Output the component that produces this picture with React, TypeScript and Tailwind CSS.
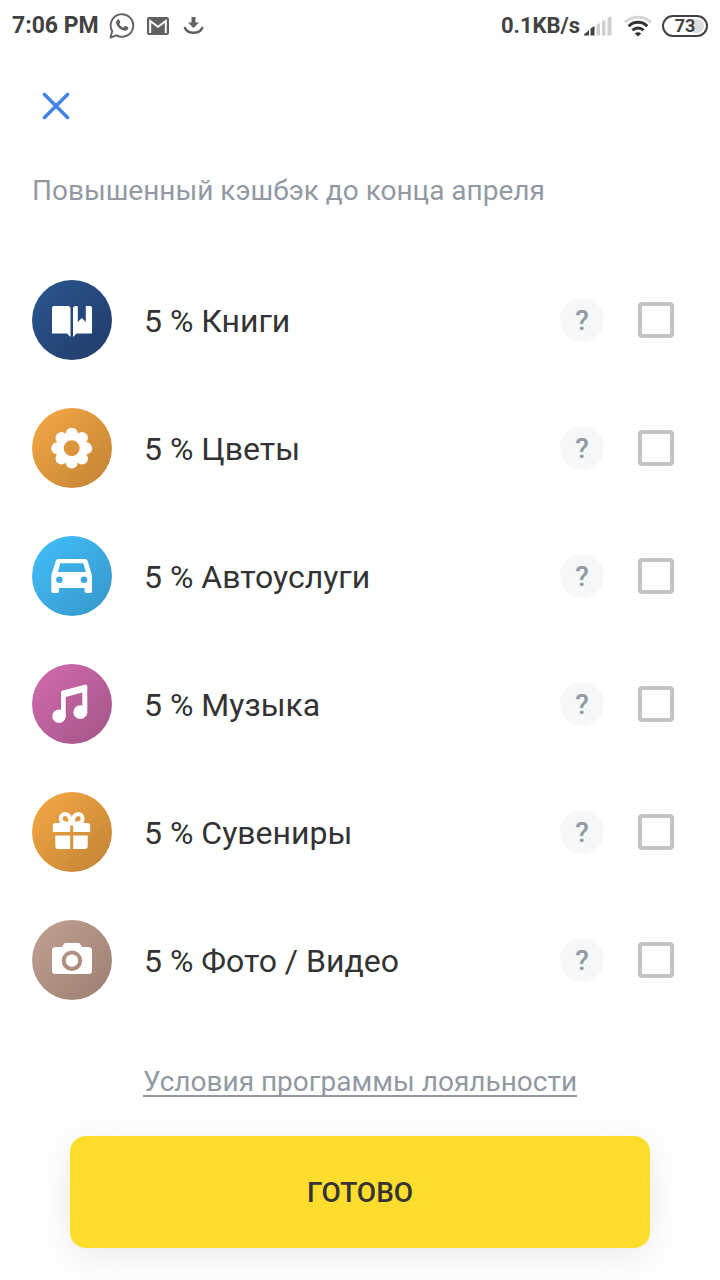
import { type ReactNode, useState } from "react";

const categories: {
  id: string;
  title: string;
  badge: string;
  icon: ReactNode;
}[] = [
  {
    id: "books",
    title: "Книги",
    badge: "from-[#2a5790] to-[#213b68]",
    icon: <BookIcon />,
  },
  {
    id: "flowers",
    title: "Цветы",
    badge: "from-[#f6aa45] to-[#c18235]",
    icon: <FlowerIcon />,
  },
  {
    id: "auto",
    title: "Автоуслуги",
    badge: "from-[#43c0fc] to-[#3596c8]",
    icon: <CarIcon />,
  },
  {
    id: "music",
    title: "Музыка",
    badge: "from-[#d36cae] to-[#a25488]",
    icon: <MusicIcon />,
  },
  {
    id: "souvenirs",
    title: "Сувениры",
    badge: "from-[#f6aa45] to-[#c18235]",
    icon: <GiftIcon />,
  },
  {
    id: "photo",
    title: "Фото / Видео",
    badge: "from-[#c3a193] to-[#9b7e72]",
    icon: <CameraIcon />,
  },
];

function BadgeSvg({ children }: { children: ReactNode }) {
  return (
    <svg viewBox="0 0 80 80" className="size-20" fill="#fff" aria-hidden>
      {children}
    </svg>
  );
}

function BookIcon() {
  return (
    <BadgeSvg>
      <path d="M22 26h14.500l2 1.500V57L35 53.500H20V28a2 2 0 0 1 2-2Z" />
      <path d="M43 26h2.800v16l4-4 4 4V26H58a2 2 0 0 1 2 2v25.500H44.500L41 57V27.500Z" />
    </BadgeSvg>
  );
}

function FlowerIcon() {
  return (
    <BadgeSvg>
      <circle cx="39.700" cy="40.200" r="11.800" fill="none" stroke="#fff" strokeWidth="7.600" />
      <circle cx="39.700" cy="25.800" r="6" />
      <circle cx="49.900" cy="30" r="6" />
      <circle cx="54.100" cy="40.200" r="6" />
      <circle cx="49.900" cy="50.400" r="6" />
      <circle cx="39.700" cy="54.600" r="6" />
      <circle cx="29.500" cy="50.400" r="6" />
      <circle cx="25.300" cy="40.200" r="6" />
      <circle cx="29.500" cy="30" r="6" />
    </BadgeSvg>
  );
}

function CarIcon() {
  return (
    <BadgeSvg>
      <path
        fillRule="evenodd"
        d="M26.500 23h26.500c1.500 0 2.300.7 2.700 2l4 13.500c.2.700.3 1.300.3 2V55a2 2 0 0 1-2 2h-3.500a2 2 0 0 1-2-2v-3H27v3a2 2 0 0 1-2 2h-3.700a2 2 0 0 1-2-2V40.500c0-.7 0-1.300.2-2L23.800 25c.4-1.300 1.200-2 2.700-2ZM28.300 27.300L25.800 36h28l-2.500-8.700ZM27.400 40.400a3.300 3.300 0 1 0 0 6.600a3.300 3.300 0 0 0 0-6.600ZM52 40.400a3.300 3.300 0 1 0 0 6.600a3.300 3.300 0 0 0 0-6.600Z"
      />
    </BadgeSvg>
  );
}

function MusicIcon() {
  return (
    <BadgeSvg>
      <circle cx="27" cy="52.200" r="6.700" />
      <circle cx="48.300" cy="48.200" r="6.900" />
      <path d="M29 53V29c0-1.300.6-2 1.800-2.400l22-5.800c1.500-.4 2.500.2 2.500 1.700V49h-5V28.500L33.700 33v20Z" />
    </BadgeSvg>
  );
}

function GiftIcon() {
  return (
    <BadgeSvg>
      <path
        fill="none"
        stroke="#fff"
        strokeWidth="4"
        d="M39 31.500h-4.500c-3.500 0-5.700-1.800-5.700-4.700 0-2.600 1.800-4.700 4.500-4.700 3.500 0 5.200 4 5.700 9.400ZM40.400 31.500h4.500c3.500 0 5.700-1.800 5.700-4.700 0-2.600-1.800-4.700-4.500-4.700-3.500 0-5.200 4-5.700 9.400Z"
      />
      <path d="M24 31h14.200v9H20.800v-5.800A3.200 3.200 0 0 1 24 31ZM41.200 31H55a3.200 3.200 0 0 1 3.200 3.200V40h-17ZM23.300 43.600h14.900V57H26.300a3 3 0 0 1-3-3ZM41.200 43.600h14.500V54a3 3 0 0 1-3 3H41.200Z" />
    </BadgeSvg>
  );
}

function CameraIcon() {
  return (
    <BadgeSvg>
      <path
        fillRule="evenodd"
        d="M34 23h12c1 0 1.600.3 2.100 1.100L50 27h6.500a3.500 3.500 0 0 1 3.500 3.500v20a3.500 3.500 0 0 1-3.500 3.500h-33a3.500 3.500 0 0 1-3.500-3.500v-20a3.500 3.500 0 0 1 3.500-3.500H30l1.900-2.900C32.400 23.300 33 23 34 23ZM39.900 30.500a10.200 10.200 0 1 0 0 20.400a10.200 10.200 0 0 0 0-20.400Z"
      />
      <circle cx="39.900" cy="40.700" r="6.200" />
    </BadgeSvg>
  );
}

function WhatsAppIcon() {
  return (
    <svg viewBox="0 0 26 28" className="h-7 w-[26px]" aria-hidden>
      <path
        d="M1.500 25.500l1.700-6.300a11.300 11.300 0 1 1 4.300 4.200Z"
        fill="none"
        stroke="#616161"
        strokeWidth="1.900"
        strokeLinejoin="round"
      />
      <path
        d="M8.800 7.500c.5-.5 1.200-.3 1.400.2l1 2.300c.2.500 0 .8-.9 1.900.9 1.700 2.200 2.900 4.100 3.700l1.200-1.400c.3-.4.600-.4 1-.2l2.200 1.100c.5.200.6.500.5 1-.4 2-2.100 2.800-4 2.500-4.100-.7-7.900-4.300-8.200-7.800-.1-1.400.7-2.600 1.700-3.300Z"
        fill="#616161"
      />
    </svg>
  );
}

function GmailIcon() {
  return (
    <svg viewBox="0 0 22 18" className="h-[18px] w-[22px]" aria-hidden>
      <rect width="22" height="18" rx="2" fill="#616161" />
      <path
        d="M3.200 16V4L11 9.700 18.800 4v12"
        fill="none"
        stroke="#fff"
        strokeWidth="2"
      />
    </svg>
  );
}

function DownloadIcon() {
  return (
    <svg viewBox="0 0 22 20" className="h-5 w-[22px]" aria-hidden>
      <path d="M8.500 1h4v5.500H16L10.500 12 5 6.500h3.500Z" fill="#616161" />
      <path
        d="M2 12c1.400 3 4.800 4.800 8.600 4.800s7.200-1.800 8.600-4.800"
        fill="none"
        stroke="#616161"
        strokeWidth="2.600"
        strokeLinecap="round"
      />
    </svg>
  );
}

function SignalIcon() {
  return (
    <svg viewBox="0 0 28 20" className="h-5 w-7" aria-hidden>
      <path d="M0 19.500v-1l5-4.500v5.500ZM6.500 19.500v-7l4-2.500v9.500Z" fill="#424242" />
      <path
        d="M12.500 19.500V9l3.500-2v12.500ZM18 19.500V5.500l3.500-2v16ZM23.500 19.500V2L27.500 0v19.500Z"
        fill="#cfcfcf"
      />
    </svg>
  );
}

function WifiIcon() {
  return (
    <svg viewBox="0 0 28 22" className="h-[22px] w-7" fill="none" aria-hidden>
      <path d="M1 7.500a18.500 18.500 0 0 1 26 0" stroke="#d4d4d4" strokeWidth="2.800" />
      <path
        d="M4.700 11.200a13.200 13.200 0 0 1 18.600 0M8.400 15.200a8 8 0 0 1 11.200 0"
        stroke="#333"
        strokeWidth="3"
      />
      <path d="M10.800 18.500a4.600 4.600 0 0 1 6.400 0L14 21.500Z" fill="#333" />
    </svg>
  );
}

function StatusBar() {
  return (
    <div className="flex h-[52px] items-center justify-between px-3 text-[#424242]">
      <div className="flex items-center">
        <span className="text-[23px] leading-7 font-bold">7:06 PM</span>
        <span className="ml-2.5 flex items-center gap-3">
          <WhatsAppIcon />
          <GmailIcon />
          <span className="ml-0.5">
            <DownloadIcon />
          </span>
        </span>
      </div>
      <div className="flex items-center">
        <span className="text-[22px] leading-7 font-bold">0.1KB/s</span>
        <span className="ml-1">
          <SignalIcon />
        </span>
        <span className="ml-3">
          <WifiIcon />
        </span>
        <span className="ml-2.5 flex h-[22px] w-[46px] items-center justify-center rounded-full border-2 border-[#424242] bg-linear-to-r from-white from-70% to-[#dedede] to-70% bg-clip-content p-0.5 text-[18px] leading-none font-bold">
          73
        </span>
      </div>
    </div>
  );
}

export default function App() {
  const [selected, setSelected] = useState<string[]>([]);

  const toggle = (id: string) =>
    setSelected((prev) =>
      prev.includes(id) ? prev.filter((item) => item !== id) : [...prev, id],
    );

  return (
    <div className="min-h-screen bg-white font-[Roboto,sans-serif] text-[#333]">
      <StatusBar />

      <header className="px-8 pt-[30px]">
        <button
          type="button"
          aria-label="Закрыть"
          className="flex size-12 items-center justify-center"
        >
          <svg viewBox="0 0 28 28" className="size-7" aria-hidden>
            <path
              d="M2.500 2.500l23 23M25.500 2.500l-23 23"
              stroke="#4486e8"
              strokeWidth="3.600"
              strokeLinecap="round"
            />
          </svg>
        </button>
        <h1 className="mt-[43px] text-[28px] leading-9 text-[#9299a2]">
          Повышенный кэшбэк до конца апреля
        </h1>
      </header>

      <ul className="mt-[71px] flex flex-col gap-12 pr-[46px] pl-8">
        {categories.map(({ id, title, badge, icon }) => (
          <li key={id} className="flex items-center">
            <span className={`size-20 rounded-full bg-linear-to-br ${badge}`}>
              {icon}
            </span>
            <label
              htmlFor={id}
              className="ml-8 flex-1 pt-0.5 text-[32px] leading-10"
            >
              5 % {title}
            </label>
            <button
              type="button"
              aria-label={`Подробнее: ${title}`}
              className="size-11 rounded-full bg-[#f5f7f9] pt-0.5 text-[28px] leading-none font-medium text-[#9299a2]"
            >
              ?
            </button>
            <input
              id={id}
              type="checkbox"
              checked={selected.includes(id)}
              onChange={() => toggle(id)}
              className="ml-[34px] size-9 appearance-none rounded-[4px] border-4 border-[#c4c4c4] checked:bg-[#ffdd2d]"
            />
          </li>
        ))}
      </ul>

      <footer className="mt-16 flex flex-col items-stretch px-[70px] pb-8">
        <a
          href="#terms"
          className="self-center text-[28px] leading-9 text-[#9299a2] underline decoration-2 underline-offset-4 [text-decoration-skip-ink:none]"
        >
          Условия программы лояльности
        </a>
        <button
          type="button"
          className="mt-9 h-28 rounded-2xl bg-[#ffdd2d] pt-0.5 text-[28px] leading-9 font-medium shadow-[0_8px_40px_rgba(0,0,0,0.09)]"
        >
          ГОТОВО
        </button>
      </footer>
    </div>
  );
}
